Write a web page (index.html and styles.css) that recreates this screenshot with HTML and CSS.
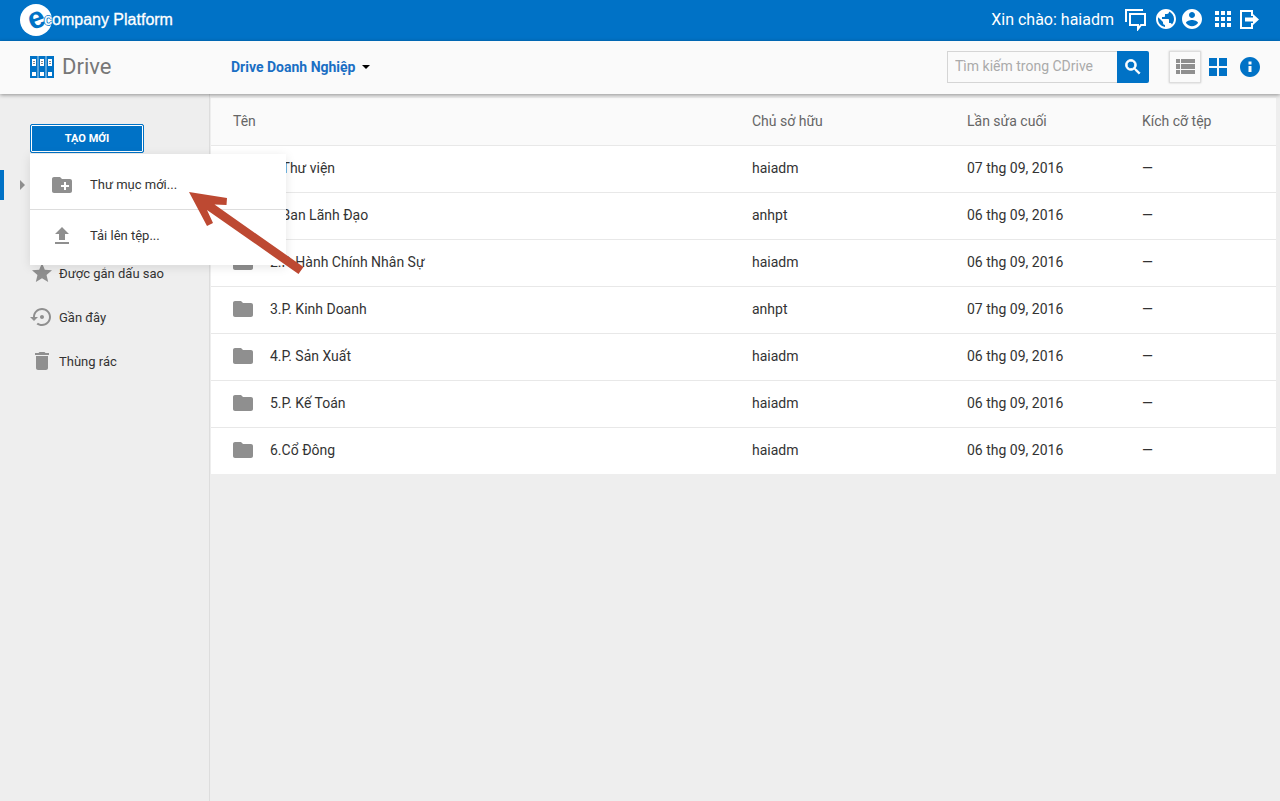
FILE: index.html
```html
<!DOCTYPE html>
<html lang="vi">

<head>
  <meta charset="UTF-8">
  <meta name="viewport" content="width=device-width, initial-scale=1.0">
  <title>Drive</title>
  <link rel="stylesheet" href="styles.css">
</head>

<body>
  <!-- icons -->
  <svg class="sprite" aria-hidden="true">
    <symbol id="folder" viewBox="0 0 24 24">
      <path d="M10 4H4c-1.100 0-2 .9-2 2v12c0 1.100.9 2 2 2h16c1.100 0 2-.9 2-2V8c0-1.100-.9-2-2-2h-8l-2-2z" />
    </symbol>
  </svg>

  <header class="topbar">
    <a class="logo" href="#">
      <span class="logo-mark"><span class="logo-e">e</span></span>
      <span class="logo-text">company Platform</span>
    </a>
    <div class="user">
      <span class="hello">Xin chào: haiadm</span>
      <button class="icon-btn" aria-label="Tin nhắn">
        <svg class="outline" viewBox="0 0 24 24">
          <path d="M3 15V3h17" />
          <path d="M7 7h15v11h-4l-3 4v-4H7z" />
        </svg>
      </button>
      <button class="icon-btn group" aria-label="Ngôn ngữ">
        <svg viewBox="0 0 24 24">
          <path d="M12 2C6.480 2 2 6.480 2 12s4.480 10 10 10 10-4.480 10-10S17.520 2 12 2zm-1 17.930c-3.950-.49-7-3.850-7-7.930 0-.62.08-1.210.21-1.790L9 15v1c0 1.100.9 2 2 2v1.930zm6.900-2.540c-.26-.81-1-1.390-1.900-1.390h-1v-3c0-.55-.45-1-1-1H8v-2h2c.55 0 1-.45 1-1V7h2c1.100 0 2-.9 2-2v-.41c2.930 1.190 5 4.060 5 7.410 0 2.080-.8 3.970-2.100 5.390z" />
        </svg>
      </button>
      <button class="icon-btn" aria-label="Tài khoản">
        <svg viewBox="0 0 24 24">
          <path d="M12 2C6.480 2 2 6.480 2 12s4.480 10 10 10 10-4.480 10-10S17.520 2 12 2zm0 3c1.660 0 3 1.340 3 3s-1.340 3-3 3-3-1.340-3-3 1.340-3 3-3zm0 14.200c-2.500 0-4.710-1.280-6-3.220.03-1.990 4-3.080 6-3.080 1.990 0 5.970 1.090 6 3.080-1.290 1.940-3.500 3.220-6 3.220z" />
        </svg>
      </button>
      <button class="icon-btn group" aria-label="Ứng dụng">
        <svg viewBox="0 0 24 24">
          <path d="M4 8h4V4H4v4zm6 12h4v-4h-4v4zm-6 0h4v-4H4v4zm0-6h4v-4H4v4zm6 0h4v-4h-4v4zm6-10v4h4V4h-4zm-6 4h4V4h-4v4zm6 6h4v-4h-4v4zm0 6h4v-4h-4v4z" />
        </svg>
      </button>
      <button class="icon-btn" aria-label="Thoát">
        <svg viewBox="0 0 24 24">
          <path d="M16 9h-2V5H5v15h9v-4h2v6H3V3h13z" />
          <path d="M8 10.500h8V7l6 5.500-6 5.500v-3.500H8z" />
        </svg>
      </button>
    </div>
  </header>

  <div class="subbar">
    <h1 class="brand">
      <svg class="binders" viewBox="0 0 24 22">
        <path class="b" d="M0 0h24v22H0z" />
        <path class="gap" d="M7.500 0h1v22h-1zM15.500 0h1v22h-1z" />
        <path class="w" d="M2 3h4v7H2zM10 3h4v7h-4zM18 3h4v7h-4zM2 16h4v4H2zM10 16h4v4h-4zM18 16h4v4h-4z" />
        <path class="l" d="M3 5h2v1H3zM11 5h2v1h-2zM19 5h2v1h-2zM3 7h2v1H3zM11 7h2v1h-2zM19 7h2v1h-2z" />
      </svg>
      Drive
    </h1>
    <button class="drive-select">Drive Doanh Nghiệp <span class="caret"></span></button>
    <form class="search">
      <input type="text" placeholder="Tìm kiếm trong CDrive" aria-label="Tìm kiếm trong CDrive">
      <button type="button" class="search-btn" aria-label="Tìm kiếm">
        <svg viewBox="0 0 24 24">
          <path d="M15.500 14h-.79l-.28-.27C15.410 12.590 16 11.110 16 9.500 16 5.910 13.090 3 9.500 3S3 5.910 3 9.500 5.910 16 9.500 16c1.610 0 3.090-.59 4.230-1.570l.27.28v.79l5 4.990L20.490 19l-4.990-5zm-6 0C7.010 14 5 11.990 5 9.500S7.010 5 9.500 5 14 7.010 14 9.500 11.990 14 9.500 14z" />
        </svg>
      </button>
    </form>
    <div class="views">
      <button class="view active" aria-label="Danh sách">
        <svg viewBox="0 0 24 24">
          <path d="M3 4h4v4H3zM8 4h14v4H8zM3 9h4v5H3zM8 9h14v5H8zM3 15h4v4H3zM8 15h14v4H8z" />
        </svg>
      </button>
      <button class="view" aria-label="Lưới">
        <svg viewBox="0 0 24 24">
          <path d="M3 3h8v8H3zM13 3h8v8h-8zM3 13h8v8H3zM13 13h8v8h-8z" />
        </svg>
      </button>
      <button class="view" aria-label="Chi tiết">
        <svg viewBox="0 0 24 24">
          <path d="M12 2C6.480 2 2 6.480 2 12s4.480 10 10 10 10-4.480 10-10S17.520 2 12 2zm1.500 15h-3v-6h3v6zm0-7.500h-3v-3h3v3z" />
        </svg>
      </button>
    </div>
  </div>

  <div class="main">
    <aside class="sidebar">
      <div class="create">
        <button class="create-btn">TẠO MỚI</button>
        <ul class="menu">
          <li>
            <button class="menu-item">
              <svg viewBox="0 0 24 24">
                <path d="M20 6h-8l-2-2H4c-1.110 0-1.990.89-1.990 2L2 18c0 1.110.89 2 2 2h16c1.110 0 2-.89 2-2V8c0-1.110-.89-2-2-2zm-1 8h-3v3h-2v-3h-3v-2h3V9h2v3h3v2z" />
              </svg>
              Thư mục mới...
            </button>
          </li>
          <li>
            <button class="menu-item">
              <svg viewBox="0 0 24 24">
                <path d="M9 16h6v-6h4l-7-7-7 7h4zm-4 2h14v2H5z" />
              </svg>
              Tải lên tệp...
            </button>
          </li>
        </ul>
      </div>
      <div class="tree"><span class="tree-arrow"></span></div>
      <nav class="nav">
        <a href="#">
          <svg viewBox="0 0 24 24">
            <path d="M12 17.270L18.180 21l-1.640-7.030L22 9.240l-7.190-.61L12 2 9.190 8.630 2 9.240l5.460 4.730L5.820 21z" />
          </svg>
          Được gắn dấu sao
        </a>
        <a href="#">
          <svg viewBox="0 0 24 24">
            <path d="M14 12c0-1.100-.9-2-2-2s-2 .9-2 2 .9 2 2 2 2-.9 2-2zm-2-9c-4.970 0-9 4.030-9 9H0l4 4 4-4H5c0-3.870 3.130-7 7-7s7 3.130 7 7-3.130 7-7 7c-1.510 0-2.910-.49-4.060-1.300l-1.420 1.440C8.040 20.300 9.940 21 12 21c4.970 0 9-4.030 9-9s-4.030-9-9-9z" />
          </svg>
          Gần đây
        </a>
        <a href="#">
          <svg viewBox="0 0 24 24">
            <path d="M6 19c0 1.100.9 2 2 2h8c1.100 0 2-.9 2-2V7H6v12zM19 4h-3.500l-1-1h-5l-1 1H5v2h14V4z" />
          </svg>
          Thùng rác
        </a>
      </nav>
    </aside>

    <main class="content">
      <table class="files">
        <thead>
          <tr>
            <th class="name">Tên</th>
            <th class="owner">Chủ sở hữu</th>
            <th class="date">Lần sửa cuối</th>
            <th class="size">Kích cỡ tệp</th>
          </tr>
        </thead>
        <tbody>
          <tr>
            <td><div class="file"><svg><use href="#folder" /></svg>0.Thư viện</div></td>
            <td>haiadm</td>
            <td>07 thg 09, 2016</td>
            <td>—</td>
          </tr>
          <tr>
            <td><div class="file"><svg><use href="#folder" /></svg>1.Ban Lãnh Đạo</div></td>
            <td>anhpt</td>
            <td>06 thg 09, 2016</td>
            <td>—</td>
          </tr>
          <tr>
            <td><div class="file"><svg><use href="#folder" /></svg>2.P. Hành Chính Nhân Sự</div></td>
            <td>haiadm</td>
            <td>06 thg 09, 2016</td>
            <td>—</td>
          </tr>
          <tr>
            <td><div class="file"><svg><use href="#folder" /></svg>3.P. Kinh Doanh</div></td>
            <td>anhpt</td>
            <td>07 thg 09, 2016</td>
            <td>—</td>
          </tr>
          <tr>
            <td><div class="file"><svg><use href="#folder" /></svg>4.P. Sản Xuất</div></td>
            <td>haiadm</td>
            <td>06 thg 09, 2016</td>
            <td>—</td>
          </tr>
          <tr>
            <td><div class="file"><svg><use href="#folder" /></svg>5.P. Kế Toán</div></td>
            <td>haiadm</td>
            <td>06 thg 09, 2016</td>
            <td>—</td>
          </tr>
          <tr>
            <td><div class="file"><svg><use href="#folder" /></svg>6.Cổ Đông</div></td>
            <td>haiadm</td>
            <td>06 thg 09, 2016</td>
            <td>—</td>
          </tr>
        </tbody>
      </table>
    </main>
  </div>

  <!-- arrow pointing at the new folder item -->
  <svg class="pointer" viewBox="0 0 116 84" aria-hidden="true">
    <path d="M0 0L38 6l-.5 7-12-.5L114.500 75l-5 7L18 18l6 13-6 3z" />
  </svg>
</body>

</html>
```

FILE: styles.css
```css
* {
  margin: 0;
  padding: 0;
  box-sizing: border-box;
  list-style: none;
}

body {
  display: flex;
  flex-direction: column;
  min-height: 100vh;
  position: relative;
  background-color: #eee;
  color: #333;
  font-family: Roboto, "Noto Sans", sans-serif;
  font-size: 14px;
}

button {
  border: none;
  background: none;
  color: inherit;
  font: inherit;
  cursor: pointer;
}

a {
  color: inherit;
  text-decoration: none;
}

svg {
  display: block;
  flex: none;
  width: 24px;
  height: 24px;
  fill: currentColor;
}

svg.outline {
  fill: none;
  stroke: currentColor;
  stroke-width: 2;
}

.sprite {
  position: absolute;
  width: 0;
  height: 0;
}

/* top bar */
.topbar {
  display: flex;
  align-items: center;
  justify-content: space-between;
  height: 41px;
  padding: 0 19px 1px 20px;
  background-color: #0072c6;
  color: #fff;
}

.logo {
  display: flex;
  align-items: center;
}

.logo-mark {
  width: 32px;
  height: 32px;
  border-radius: 50%;
  background-color: #fff;
  color: #0072c6;
  text-align: center;
}

.logo-e {
  display: block;
  font: bold 30px/28px "Liberation Sans", sans-serif;
  transform: rotate(-20deg);
}

.logo-text {
  position: relative;
  margin-left: -8px;
  font-family: "Liberation Sans", sans-serif;
  font-size: 16px;
  -webkit-text-stroke: 0.3px #fff;
  text-shadow: -1px 0 #0072c6, 1px 0 #0072c6, 0 -1px #0072c6, 0 1px #0072c6;
}

.user {
  display: flex;
  align-items: center;
  gap: 2px;
  padding-bottom: 2px;
}

.hello {
  margin-right: 7px;
  font-size: 16px;
}

.icon-btn.group {
  margin-left: 5px;
}

/* second bar */
.subbar {
  display: flex;
  align-items: center;
  height: 53px;
  padding: 0 14px 2px 30px;
  position: relative;
  z-index: 1;
  background-color: #fafafa;
  box-shadow: 0 1px 4px rgba(0, 0, 0, .4);
}

.brand {
  display: flex;
  align-items: center;
  gap: 8px;
  width: 201px;
  color: #777;
  font-size: 22px;
  font-weight: 400;
}

.binders {
  height: 22px;
}

.binders .b {
  fill: #0072c6;
}

.binders .gap {
  fill: #b5d5ee;
}

.binders .w {
  fill: #fff;
}

.binders .l {
  fill: #888;
}

.drive-select {
  display: flex;
  align-items: center;
  gap: 6px;
  color: #1a6fc4;
  font-size: 14px;
  font-weight: 700;
}

.caret {
  border: 4px solid transparent;
  border-top-color: #000;
  border-bottom: none;
}

.search {
  display: flex;
  margin-left: auto;
}

.search input {
  width: 170px;
  height: 32px;
  padding: 0 7px 2px;
  border: 1px solid #d5d5d5;
  border-right: none;
  background-color: #fafafa;
  font: inherit;
}

.search input::placeholder {
  color: #aaa;
}

.search-btn {
  width: 32px;
  height: 32px;
  padding: 5px 6px;
  border-radius: 0 2px 2px 0;
  background-color: #0072c6;
  color: #fff;
}

.search-btn path {
  stroke: currentColor;
}

.search-btn svg {
  width: 20px;
  height: 20px;
}

.views {
  display: flex;
  margin-left: 20px;
}

.view {
  width: 32px;
  height: 32px;
  padding: 4px;
  color: #0072c6;
}

.view.active {
  padding: 3px;
  margin-right: 1px;
  border: 1px solid #ddd;
  box-shadow: 0 0 2px rgba(0, 0, 0, .2);
  color: #8f8f8f;
}

/* sidebar */
.main {
  display: flex;
  flex: 1;
}

.sidebar {
  width: 210px;
  padding-top: 30px;
  border-right: 1px solid #ddd;
}

.create {
  position: relative;
  margin-left: 30px;
}

.create-btn {
  display: block;
  width: 114px;
  height: 29px;
  border: 1px solid #0072c6;
  border-radius: 2px;
  box-shadow: inset 0 0 0 1px #fff;
  background-color: #0072c6;
  color: #fff;
  font-size: 11px;
  font-weight: 700;
}

.menu {
  position: absolute;
  top: 30px;
  left: 0;
  z-index: 1;
  width: 256px;
  padding: 8px 0 7px;
  background-color: #fff;
  box-shadow: 0 2px 10px rgba(0, 0, 0, .1);
}

.menu li + li {
  margin-top: 2px;
  padding-top: 3px;
  border-top: 1px solid #ddd;
}

.menu-item {
  display: flex;
  align-items: center;
  gap: 16px;
  width: 100%;
  height: 45px;
  padding-left: 20px;
  font-size: 13px;
}

.menu-item svg,
.nav svg,
.file svg {
  color: #8f8f8f;
}

/* current drive */
.tree {
  display: flex;
  align-items: center;
  height: 30px;
  margin-top: 17px;
  padding-left: 16px;
  border-left: 4px solid #0072c6;
}

.tree-arrow {
  border: 5px solid transparent;
  border-left-color: #8f8f8f;
  border-right: none;
}

.nav {
  margin-top: 51px;
  padding-left: 30px;
}

.nav a {
  display: flex;
  align-items: center;
  gap: 5px;
  height: 44px;
  font-size: 13px;
}

/* file list */
.content {
  flex: 1;
  padding: 4px 4px 0 1px;
}

.files {
  width: 100%;
  border-collapse: separate;
  border-spacing: 0;
  table-layout: fixed;
  background-color: #fff;
}

.files th,
.files td {
  height: 47px;
  padding-bottom: 2px;
  border-top: 1px solid #e8e8e8;
  text-align: left;
  font-weight: 400;
}

.files th {
  border-top-color: #fafafa;
  background-color: #fafafa;
  color: #666;
}

.files .name {
  padding-left: 22px;
}

.files .owner {
  width: 215px;
}

.files .date {
  width: 175px;
}

.files .size {
  width: 134px;
}

.file {
  display: flex;
  align-items: center;
  gap: 15px;
  padding-left: 20px;
}

.pointer {
  position: absolute;
  top: 192px;
  left: 189px;
  z-index: 2;
  width: 116px;
  height: 84px;
  color: #bd4932;
}
```
